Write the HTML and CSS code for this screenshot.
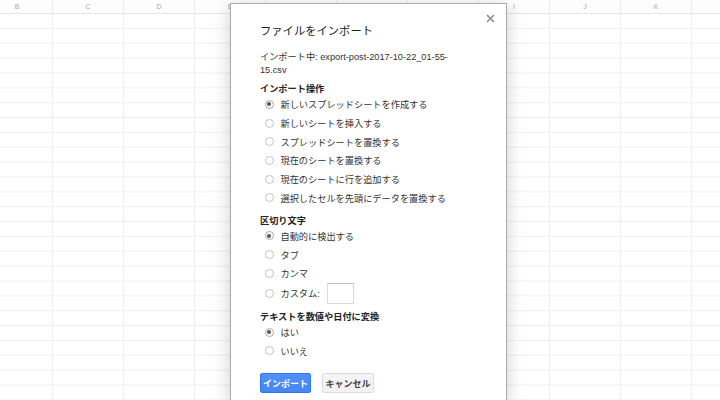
FILE: index.html
```html
<!DOCTYPE html>
<html lang="ja">
<head>
<meta charset="utf-8">
<title>ファイルをインポート</title>
<link rel="stylesheet" href="styles.css">
</head>
<body>
<div class="sheet">
  <div class="colhead">
    <div class="col">B</div><div class="col">C</div><div class="col">D</div><div class="col">E</div><div class="col">F</div><div class="col">G</div><div class="col">H</div><div class="col">I</div><div class="col">J</div><div class="col">K</div>
  </div>
  <div class="grid"></div>
</div>

<div class="dialog">
  <button class="close" aria-label="閉じる">
    <svg width="9" height="9" viewBox="0 0 9 9"><path d="M1 1L8 8M8 1L1 8" stroke="#8a8a8a" stroke-width="1.5" fill="none"/></svg>
  </button>
  <h1 class="title">ファイルをインポート</h1>
  <p class="file">インポート中: export-post-2017-10-22_01-55-<br>15.csv</p>

  <h2 class="heading">インポート操作</h2>
  <div class="row"><span class="radio checked"></span><span>新しいスプレッドシートを作成する</span></div>
  <div class="row"><span class="radio"></span><span>新しいシートを挿入する</span></div>
  <div class="row"><span class="radio"></span><span>スプレッドシートを置換する</span></div>
  <div class="row"><span class="radio"></span><span>現在のシートを置換する</span></div>
  <div class="row"><span class="radio"></span><span>現在のシートに行を追加する</span></div>
  <div class="row"><span class="radio"></span><span>選択したセルを先頭にデータを置換する</span></div>

  <h2 class="heading gap">区切り文字</h2>
  <div class="row"><span class="radio checked"></span><span>自動的に検出する</span></div>
  <div class="row"><span class="radio"></span><span>タブ</span></div>
  <div class="row"><span class="radio"></span><span>カンマ</span></div>
  <div class="row custom"><span class="radio"></span><span>カスタム:</span><span class="textbox"></span></div>

  <h2 class="heading gap2">テキストを数値や日付に変換</h2>
  <div class="row"><span class="radio checked"></span><span>はい</span></div>
  <div class="row"><span class="radio"></span><span>いいえ</span></div>

  <div class="buttons">
    <button class="btn primary">インポート</button>
    <button class="btn">キャンセル</button>
  </div>
</div>
</body>
</html>
```

FILE: styles.css
```css
html, body {
  margin: 0;
  padding: 0;
  width: 720px;
  height: 400px;
  overflow: hidden;
  background: #fff;
  font-family: "Liberation Sans", "Noto Sans CJK JP", sans-serif;
}

.sheet {
  width: 720px;
  height: 400px;
  overflow: hidden;
}

.colhead {
  display: flex;
  height: 14px;
  margin-left: -18px;
  border-bottom: 1px solid #e6e6e6;
  box-sizing: border-box;
  background: #fdfdfd;
}

.col {
  flex: none;
  width: 71px;
  box-sizing: border-box;
  border-right: 1px solid #ececec;
  text-align: center;
  font-size: 7px;
  line-height: 13px;
  color: #a8a8a8;
}

.grid {
  height: 386px;
  background-image:
    linear-gradient(to right, #efefef 1px, transparent 1px),
    linear-gradient(to top, #efefef 1px, transparent 1px);
  background-size: 71px 14.86px;
  background-position: 52px 0, 0 0;
}

.dialog {
  position: absolute;
  left: 230px;
  top: 3px;
  width: 277px;
  height: 397px;
  overflow: hidden;
  box-sizing: border-box;
  padding: 19px 29px 0 29px;
  background: #fff;
  border: 1px solid #acacac;
  border-bottom: 0;
  box-shadow: 0 4px 16px rgba(0, 0, 0, 0.2);
  color: #333;
  font-size: 9.2px;
}

.close {
  position: absolute;
  top: 10px;
  right: 11px;
  width: 9px;
  height: 9px;
  padding: 0;
  border: 0;
  background: none;
  display: block;
}
.close svg { display: block; }

.title {
  margin: 0;
  font-size: 11.3px;
  line-height: 16px;
  font-weight: normal;
  color: #222;
}

.file {
  margin: 12px 0 0 0;
  line-height: 13px;
  white-space: nowrap;
  color: #333;
}

.heading {
  margin: 7px 0 0 0;
  font-size: 9.2px;
  line-height: 11px;
  font-weight: bold;
  color: #222;
}
.heading.gap { margin-top: 8.5px; }
.heading.gap2 { margin-top: 8px; }

.row {
  display: flex;
  align-items: center;
  height: 18.7px;
  padding-left: 4.5px;
  white-space: nowrap;
}
.row.custom { height: 21px; }

.radio {
  flex: none;
  width: 9px;
  height: 9px;
  box-sizing: border-box;
  border: 1px solid #c4c4c4;
  border-radius: 50%;
  background: #fff;
  margin-right: 7px;
  position: relative;
}
.radio.checked {
  border-color: #a8a8a8;
}
.radio.checked::after {
  content: "";
  position: absolute;
  left: 1.5px;
  top: 1.5px;
  width: 4px;
  height: 4px;
  border-radius: 50%;
  background: #555;
}

.textbox {
  flex: none;
  width: 27px;
  height: 21px;
  box-sizing: border-box;
  margin-left: 7px;
  border: 1px solid #d9d9d9;
  border-top-color: #c0c0c0;
  background: #fff;
}

.buttons {
  display: flex;
  gap: 11px;
  margin-top: 13px;
}

.btn {
  width: 52px;
  height: 20px;
  padding: 0;
  box-sizing: border-box;
  border: 1px solid #dcdcdc;
  border-radius: 2px;
  background: linear-gradient(#f5f5f5, #f1f1f1);
  color: #444;
  font-family: "Liberation Sans", "Noto Sans CJK JP", sans-serif;
  font-size: 9px;
  font-weight: bold;
}
.btn.primary {
  width: 51px;
  border-color: #3079ed;
  background: linear-gradient(#4d90fe, #4787ed);
  color: #fff;
}
```
